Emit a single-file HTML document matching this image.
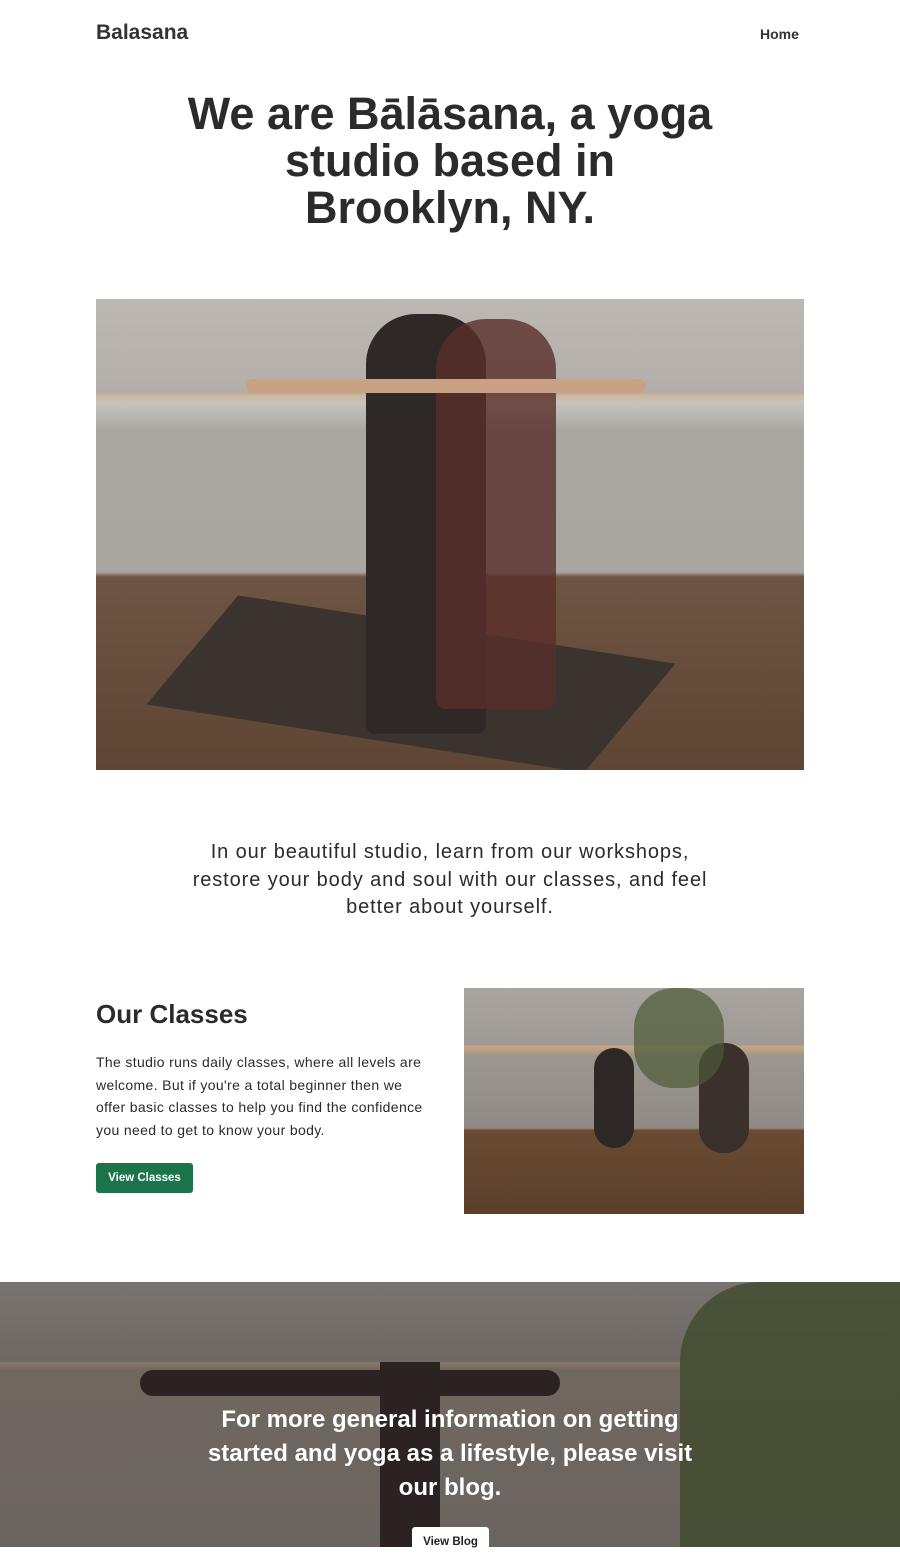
<!DOCTYPE html>
<html><head><meta charset="utf-8"><style>
*{margin:0;padding:0;box-sizing:border-box}
body{width:900px;height:1547px;overflow:hidden;background:#fff;font-family:"Liberation Sans",sans-serif;color:#2b2b2b;position:relative}
.a{position:absolute}
</style></head><body>
<div class="a" style="left:96px;top:21px;font-size:21px;font-weight:bold;color:#333">Balasana</div>
<div class="a" style="left:760px;top:26px;font-size:14px;font-weight:bold;color:#333">Home</div>
<div class="a" style="left:180px;width:540px;top:90px;text-align:center;font-size:45px;font-weight:bold;line-height:47px;color:#2b2b2b">We are Bālāsana, a yoga studio based in Brooklyn, NY.</div>
<div class="a" style="left:96px;top:299px;width:708px;height:471px;background:linear-gradient(180deg,#bdb8b3 0%,#b3aea9 20%,#d0b89a 20.5%,#c7c3bd 22%,#aaa6a1 28%,#a9a5a0 58%,#6d5443 59%,#5f4533 100%);overflow:hidden">
<div class="a" style="left:70px;top:330px;width:490px;height:110px;background:#3a332e;transform:skewX(-35deg) rotate(8deg)"></div>
<div class="a" style="left:270px;top:15px;width:120px;height:420px;background:#2e2826;border-radius:50px 50px 10px 10px"></div>
<div class="a" style="left:340px;top:20px;width:120px;height:390px;background:#5a2e2a;border-radius:50px 50px 10px 10px;opacity:.8"></div>
<div class="a" style="left:150px;top:80px;width:400px;height:14px;background:#c9a286;border-radius:7px"></div>
</div>
<div class="a" style="left:190px;width:520px;top:839px;text-align:center;font-size:20px;line-height:27.5px;letter-spacing:0.9px;color:#2b2b2b">In our beautiful studio, learn from our workshops, restore your body and soul with our classes, and feel better about yourself.</div>
<div class="a" style="left:96px;top:999px;font-size:26px;font-weight:bold;color:#2b2b2b">Our Classes</div>
<div class="a" style="left:96px;top:1051px;width:335px;font-size:14px;line-height:22.5px;letter-spacing:0.35px;color:#2b2b2b">The studio runs daily classes, where all levels are welcome. But if you're a total beginner then we offer basic classes to help you find the confidence you need to get to know your body.</div>
<div class="a" style="left:96px;top:1163px;width:97px;height:30px;background:#1b744a;border-radius:3px;color:#fff;font-size:11.5px;font-weight:bold;text-align:center;line-height:30px">View Classes</div>
<div class="a" style="left:464px;top:988px;width:340px;height:226px;background:linear-gradient(180deg,#a9a49f 0%,#9f9a95 25%,#c9a47e 26%,#9b978f 30%,#8f8a84 62%,#6a4b33 63%,#5b3f2b 100%);overflow:hidden">
<div class="a" style="left:130px;top:60px;width:40px;height:100px;background:#2d2826;border-radius:20px"></div>
<div class="a" style="left:235px;top:55px;width:50px;height:110px;background:#3a312b;border-radius:24px"></div>
<div class="a" style="left:170px;top:0;width:90px;height:100px;background:#4c5a36;border-radius:40px;opacity:.7"></div>
</div>
<div class="a" style="left:0;top:1282px;width:900px;height:265px;background:linear-gradient(180deg,#7a7470 0%,#6e6864 30%,#8c7866 30.5%,#70685f 33%,#6a6460 100%);overflow:hidden">
<div class="a" style="left:140px;top:88px;width:420px;height:26px;background:#2a2322;border-radius:13px"></div>
<div class="a" style="left:380px;top:80px;width:60px;height:185px;background:#2a2322"></div>
<div class="a" style="left:680px;top:0;width:220px;height:265px;background:#3e4a2c;opacity:.8;border-radius:80px 0 0 0"></div>
</div>
<div class="a" style="left:200px;width:500px;top:1403px;text-align:center;font-size:24px;font-weight:bold;line-height:34px;color:#fff">For more general information on getting started and yoga as a lifestyle, please visit our blog.</div>
<div class="a" style="left:412px;top:1527px;width:77px;height:30px;background:#fff;border-radius:3px;color:#222;font-size:11.5px;font-weight:bold;text-align:center;line-height:30px">View Blog</div>
</body></html>
